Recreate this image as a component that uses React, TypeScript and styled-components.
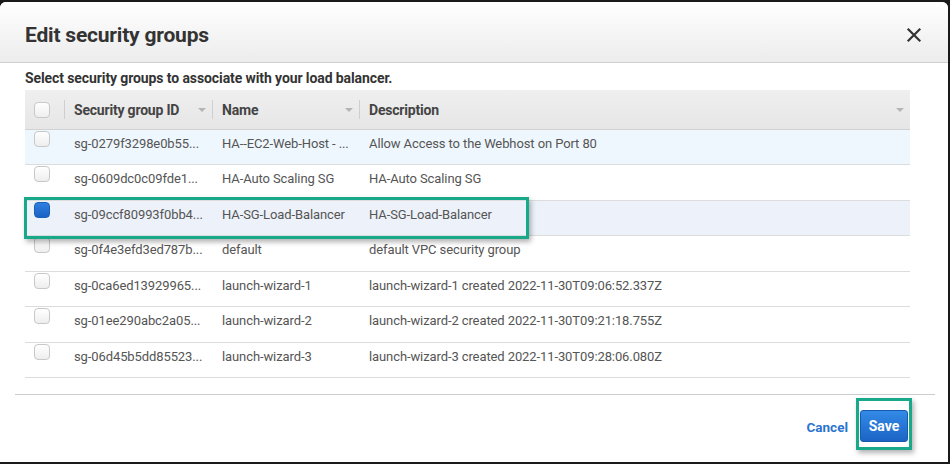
import React from "react";
import styled, { createGlobalStyle } from "styled-components";

const Global = createGlobalStyle`
  html, body { margin: 0; padding: 0; background: #2e2e2e; }
  body { font-family: Roboto, "Liberation Sans", Arial, sans-serif; }
  * { box-sizing: border-box; }
`;

const Frame = styled.div`
  width: 950px;
  height: 464px;
  padding: 2px 2px 2px 0;
  background: #1a1a1a;
  overflow: hidden;
`;

const Modal = styled.div`
  position: relative;
  width: 948px;
  height: 460px;
  background: #fff;
  border-radius: 6px 6px 0 0;
  display: flex;
  flex-direction: column;
`;

const Header = styled.div`
  height: 61px;
  flex: none;
  display: flex;
  align-items: center;
  justify-content: space-between;
  padding: 6px 26px 0 25px;
  border-bottom: 1px solid #cfcfcf;
  border-radius: 6px 6px 0 0;
  background: linear-gradient(#ffffff, #ececec);
`;

const Title = styled.h1`
  margin: 0;
  font-size: 21px;
  font-weight: 700;
  color: #333;
  letter-spacing: -0.2px;
`;

const CloseBtn = styled.button`
  border: 0;
  background: none;
  padding: 0;
  width: 16px;
  height: 16px;
  display: flex;
  cursor: pointer;
`;

const Body = styled.div`
  padding: 7px 38px 0 25px;
`;

const Lead = styled.p`
  margin: 0 0 4px;
  font-size: 14px;
  line-height: 16px;
  font-weight: 700;
  color: #333;
  letter-spacing: -0.1px;
`;

const Table = styled.div`
  width: 885px;
  display: grid;
  grid-template-columns: 39px 148px 147px 1fr;
`;

const HeadCell = styled.div<{ $divider?: boolean }>`
  height: 40px;
  display: flex;
  align-items: center;
  justify-content: space-between;
  padding: 0 4px 0 ${(p) => (p.$divider ? "10px" : "9px")};
  background: linear-gradient(#efefef, #e6e6e6);
  border-bottom: 1px solid #d2d2d2;
  position: relative;
  font-size: 14px;
  font-weight: 700;
  color: #444;
  letter-spacing: -0.2px;
  &::before {
    content: "";
    display: ${(p) => (p.$divider ? "block" : "none")};
    position: absolute;
    left: 0;
    top: 10px;
    height: 19px;
    width: 1px;
    background: #cfcfcf;
  }
`;

const Caret = styled.span`
  width: 0;
  height: 0;
  border-left: 4px solid transparent;
  border-right: 4px solid transparent;
  border-top: 4px solid #b5b5b5;
  margin-right: 2px;
`;

const Cell = styled.div<{ $bg: string }>`
  height: 35.43px;
  padding: 5px 0 0 10px;
  background: ${(p) => p.$bg};
  border-bottom: 1px solid #dcdcdc;
  font-size: 13px;
  line-height: 18px;
  color: #555;
  letter-spacing: -0.1px;
  white-space: nowrap;
  overflow: hidden;
`;

const CheckCell = styled(Cell)`
  padding: 1px 0 0 9px;
`;

const Box = styled.span<{ $checked?: boolean }>`
  display: block;
  width: 16px;
  height: 16px;
  border-radius: 4px;
  border: 1px solid ${(p) => (p.$checked ? "#1a5fb8" : "#c8c8c8")};
  background: ${(p) =>
    p.$checked
      ? "linear-gradient(#2f7fe0, #1a62c4)"
      : "linear-gradient(#ffffff, #eeeeee)"};
`;

const Footer = styled.div`
  margin: 16px 13px 0 15px;
  border-top: 1px solid #cccccc;
  display: flex;
  justify-content: flex-end;
  align-items: center;
  gap: 12px;
  padding: 15px 27px 0 0;
`;

const Cancel = styled.a`
  font-size: 13.5px;
  font-weight: 700;
  color: #2a75d0;
  cursor: pointer;
  margin-top: 2px;
`;

const SaveBtn = styled.button`
  width: 48px;
  height: 32px;
  border: 1px solid #1859b0;
  border-radius: 3px;
  background: linear-gradient(#338ae6, #1b64c6);
  color: #fff;
  font-family: inherit;
  font-size: 14px;
  font-weight: 700;
  padding: 0;
`;

const Highlight = styled.div`
  position: absolute;
  border: 3px solid #17a98a;
  box-shadow: 2px 3px 5px rgba(0, 0, 0, 0.3);
  pointer-events: none;
`;

const rows = [
  { id: "sg-0279f3298e0b55...", name: "HA--EC2-Web-Host - ...", desc: "Allow Access to the Webhost on Port 80", bg: "#eff7fe" },
  { id: "sg-0609dc0c09fde1...", name: "HA-Auto Scaling SG", desc: "HA-Auto Scaling SG", bg: "#fff" },
  { id: "sg-09ccf80993f0bb4...", name: "HA-SG-Load-Balancer", desc: "HA-SG-Load-Balancer", bg: "#edf2fa", checked: true },
  { id: "sg-0f4e3efd3ed787b...", name: "default", desc: "default VPC security group", bg: "#fff" },
  { id: "sg-0ca6ed13929965...", name: "launch-wizard-1", desc: "launch-wizard-1 created 2022-11-30T09:06:52.337Z", bg: "#fff" },
  { id: "sg-01ee290abc2a05...", name: "launch-wizard-2", desc: "launch-wizard-2 created 2022-11-30T09:21:18.755Z", bg: "#fff" },
  { id: "sg-06d45b5dd85523...", name: "launch-wizard-3", desc: "launch-wizard-3 created 2022-11-30T09:28:06.080Z", bg: "#fff" },
];

export default function App() {
  return (
    <Frame>
      <Global />
      <Modal>
        <Header>
          <Title>Edit security groups</Title>
          <CloseBtn aria-label="Close">
            <svg width="16" height="16" viewBox="0 0 16 16">
              <path d="M2.5 2.5 L13.5 13.5 M13.5 2.5 L2.5 13.5" stroke="#333" strokeWidth="2.2" strokeLinecap="square" />
            </svg>
          </CloseBtn>
        </Header>
        <Body>
          <Lead>Select security groups to associate with your load balancer.</Lead>
          <Table>
            <HeadCell>
              <Box />
            </HeadCell>
            <HeadCell $divider>
              <span>Security group ID</span>
              <Caret />
            </HeadCell>
            <HeadCell $divider>
              <span>Name</span>
              <Caret />
            </HeadCell>
            <HeadCell $divider>
              <span>Description</span>
              <Caret />
            </HeadCell>
            {rows.map((r) => (
              <React.Fragment key={r.id}>
                <CheckCell $bg={r.bg}>
                  <Box $checked={r.checked} />
                </CheckCell>
                <Cell $bg={r.bg}>{r.id}</Cell>
                <Cell $bg={r.bg}>{r.name}</Cell>
                <Cell $bg={r.bg}>{r.desc}</Cell>
              </React.Fragment>
            ))}
          </Table>
        </Body>
        <Footer>
          <Cancel>Cancel</Cancel>
          <SaveBtn>Save</SaveBtn>
        </Footer>
        <Highlight style={{ left: 24, top: 195, width: 505, height: 42 }} />
        <Highlight style={{ left: 856, top: 396, width: 56, height: 52 }} />
      </Modal>
    </Frame>
  );
}
